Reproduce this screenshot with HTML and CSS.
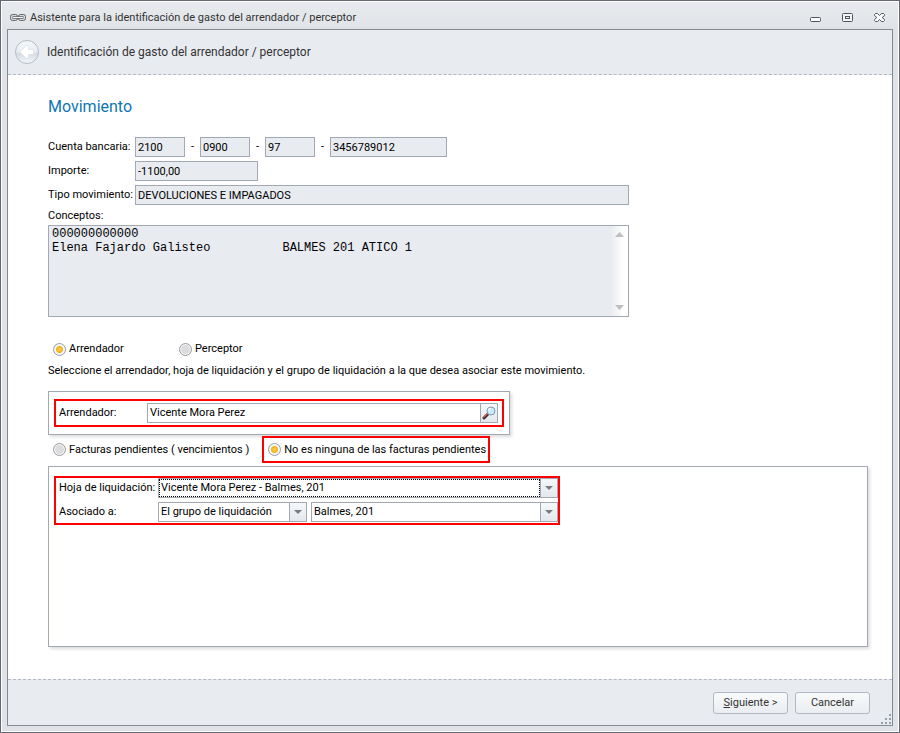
FILE: index.html
```html
<!DOCTYPE html>
<html lang="es">
<head>
    <meta charset="UTF-8">
    <meta name="viewport" content="width=device-width, initial-scale=1.0">
    <title>Asistente para la identificación de gasto</title>
    <link rel="stylesheet" href="styles.css">
</head>
<body>
    <div class="window">
        <div class="titlebar">
            <svg class="link-icon" width="16" height="8" viewBox="0 0 16 8" fill="none">
                <rect x="0.5" y="0.5" width="7" height="6" rx="2" fill="#d4d6d8" stroke="#65686b"/>
                <rect x="8.5" y="0.5" width="7" height="6" rx="2" fill="#d4d6d8" stroke="#65686b"/>
                <path d="M2.500 3.500h11" stroke="#65686b" stroke-width="2.600"/>
                <path d="M3 3.500h10" stroke="#f2f3f4" stroke-width="1"/>
            </svg>
            <span class="title">Asistente para la identificación de gasto del arrendador / perceptor</span>
            <div class="window-buttons">
                <button type="button" aria-label="Minimizar">
                    <svg width="11" height="10" viewBox="0 0 11 10"><rect x="0.5" y="4.5" width="10" height="4" rx="1" fill="#fff" stroke="#4d545c"/></svg>
                </button>
                <button type="button" aria-label="Maximizar">
                    <svg width="11" height="10" viewBox="0 0 11 10" fill="#f4f5f6" stroke="#4d545c"><rect x="0.5" y="0.5" width="10" height="8" rx="1"/><rect x="3.5" y="3.5" width="4" height="2"/></svg>
                </button>
                <button type="button" aria-label="Cerrar">
                    <svg width="11" height="10" viewBox="0 0 11 10"><path d="M1.500 0.500h2l2 2 2-2h2l1 1v1l-2.300 2 2.300 2v1l-1 1h-2l-2-2-2 2h-2l-1-1v-1l2.300-2-2.300-2v-1z" fill="#fff" stroke="#4d545c"/></svg>
                </button>
            </div>
        </div>

        <form class="wizard">
            <header class="wizard-header">
                <button type="button" class="back" aria-label="Atrás">
                    <svg width="26" height="26" viewBox="0 0 26 26">
                        <defs>
                            <linearGradient id="disc" x1="0" y1="0" x2="0" y2="1">
                                <stop offset="0" stop-color="#f5f8fa"/>
                                <stop offset="0.5" stop-color="#e9edf2"/>
                                <stop offset="0.55" stop-color="#d3dae2"/>
                                <stop offset="1" stop-color="#f4f8fb"/>
                            </linearGradient>
                        </defs>
                        <circle cx="13" cy="13" r="11.500" fill="url(#disc)" stroke="#b4bbc5"/>
                        <path d="M6 13l6.500-6.500 2 1.500v2.500h5v5h-5v2.500l-2 1.500z" fill="#fff" stroke="#d8dde3" stroke-width="0.6" stroke-linejoin="round"/>
                    </svg>
                </button>
                <h1>Identificación de gasto del arrendador / perceptor</h1>
            </header>

            <main class="content">
                <h2>Movimiento</h2>

                <div class="movement">
                    <label for="banco">Cuenta bancaria:</label>
                    <div class="account">
                        <input class="field part" id="banco" value="2100" readonly>
                        <span>-</span>
                        <input class="field part" aria-label="Sucursal" value="0900" readonly>
                        <span>-</span>
                        <input class="field part" aria-label="Dígito de control" value="97" readonly>
                        <span>-</span>
                        <input class="field number" aria-label="Número de cuenta" value="3456789012" readonly>
                    </div>
                    <label for="importe">Importe:</label>
                    <input class="field amount" id="importe" value="-1100,00" readonly>
                    <label for="tipo">Tipo movimiento:</label>
                    <input class="field" id="tipo" value="DEVOLUCIONES E IMPAGADOS" readonly>
                </div>

                <label class="concepts-label" for="conceptos">Conceptos:</label>
                <div class="concepts">
                    <textarea id="conceptos" readonly>000000000000
Elena Fajardo Galisteo          BALMES 201 ATICO 1</textarea>
                    <div class="scrollbar">
                        <svg width="9" height="5" viewBox="0 0 9 5"><path d="M0 5L4.500 0 9 5z" fill="#bfbfbf"/></svg>
                        <svg width="9" height="5" viewBox="0 0 9 5"><path d="M0 0L4.500 5 9 0z" fill="#bfbfbf"/></svg>
                    </div>
                </div>

                <div class="choices who">
                    <label><input type="radio" name="quien" checked>Arrendador</label>
                    <label><input type="radio" name="quien">Perceptor</label>
                </div>
                <p>Seleccione el arrendador, hoja de liquidación y el grupo de liquidación a la que desea asociar este movimiento.</p>

                <div class="panel landlord">
                    <div class="marked landlord-row">
                        <label for="arrendador">Arrendador:</label>
                        <div class="search">
                            <input id="arrendador" value="Vicente Mora Perez">
                            <button type="button" aria-label="Buscar">
                                <svg width="14" height="14" viewBox="0 0 14 14">
                                    <path d="M2 12L6 8" stroke="#39323a" stroke-width="3" stroke-linecap="round"/>
                                    <path d="M1.500 11L5 8" stroke="#d5614a" stroke-width="1.500" stroke-linecap="round"/>
                                    <circle cx="9" cy="5" r="4" fill="#c8eafa" stroke="#8197b5"/>
                                    <path d="M6.500 4.500A2.500 2.500 0 0 1 9 2.500" fill="none" stroke="#fff" stroke-width="1.500"/>
                                </svg>
                            </button>
                        </div>
                    </div>
                </div>

                <div class="choices kind">
                    <label><input type="radio" name="factura">Facturas pendientes ( vencimientos )</label>
                    <label class="marked"><input type="radio" name="factura" checked>No es ninguna de las facturas pendientes</label>
                </div>

                <div class="panel settlement">
                    <div class="marked settlement-rows">
                        <label for="hoja">Hoja de liquidación:</label>
                        <div class="combo focused">
                            <select id="hoja"><option>Vicente Mora Perez - Balmes, 201</option></select>
                        </div>
                        <label for="asociado">Asociado a:</label>
                        <div class="pair">
                            <div class="combo group">
                                <select id="asociado"><option>El grupo de liquidación</option></select>
                            </div>
                            <div class="combo">
                                <select aria-label="Grupo"><option>Balmes, 201</option></select>
                            </div>
                        </div>
                    </div>
                </div>
            </main>

            <footer class="wizard-footer">
                <button type="button" class="action"><u>S</u>iguiente &gt;</button>
                <button type="button" class="action">Cancelar</button>
                <svg class="grip" width="10" height="10" viewBox="0 0 10 10" fill="#9a9ea6">
                    <path d="M8 0h2v2h-2zM4 4h2v2h-2zM8 4h2v2h-2zM0 8h2v2h-2zM4 8h2v2h-2zM8 8h2v2h-2z"/>
                </svg>
            </footer>
        </form>
    </div>
</body>
</html>
```
FILE: styles.css
```css
* {
    box-sizing: border-box;
}

body {
    margin: 0;
    font-family: Roboto, "Noto Sans", sans-serif;
    font-size: 11px;
    line-height: 16px;
    color: #000;
}

input, select, textarea, button {
    font: inherit;
    color: inherit;
    margin: 0;
}

label {
    white-space: nowrap;
}

h1, h2, p {
    margin: 0;
    font-weight: normal;
}

.window {
    display: flex;
    flex-direction: column;
    min-height: 100vh;
    padding: 0 6px 6px;
    border: 1px solid #646973;
    box-shadow: inset 0 0 0 1px #fff;
    background: linear-gradient(#e9ebee, #dfe3e7 30px);
}

.titlebar {
    display: flex;
    align-items: center;
    height: 28px;
    padding: 6px 8px 0 3px;
    color: #333;
}

.title {
    margin-left: 4px;
}

.window-buttons {
    display: flex;
    gap: 21px;
    margin-left: auto;
}

.window-buttons button {
    display: flex;
    padding: 0;
    border: 0;
    background: none;
}

.wizard {
    display: flex;
    flex-direction: column;
    flex: 1;
    border: 1px solid #858990;
    background: #fff;
}

.wizard-header {
    display: flex;
    align-items: center;
    gap: 7px;
    height: 45px;
    padding: 0 6px;
    border-bottom: 1px dashed #b2b8c4;
    background: #e8ebf0;
    color: #333;
}

.back {
    display: flex;
    padding: 0;
    border: 0;
    background: none;
}

.wizard-header h1 {
    font-size: 12px;
}

.content {
    flex: 1;
    padding: 21px 24px 30px 40px;
}

.content h2 {
    font-size: 16px;
    line-height: 22px;
    color: #0e76b4;
}

.movement {
    display: grid;
    grid-template-columns: 87px 494px;
    align-items: center;
    row-gap: 4px;
    margin-top: 19px;
}

.field {
    width: 100%;
    height: 20px;
    padding: 0 2px;
    border: 1px solid #a2a9b4;
    background: #e8ebf0;
}

.account {
    display: flex;
    align-items: center;
}

.account span {
    width: 15px;
    text-align: center;
}

.part {
    width: 50px;
}

.number {
    width: 117px;
}

.amount {
    width: 123px;
}

.concepts-label {
    display: block;
    margin-top: 3px;
}

.concepts {
    display: flex;
    width: 581px;
    height: 92px;
    margin-top: 1px;
    border: 1px solid #a2a9b4;
    background: #e8ebf0;
}

.concepts textarea {
    flex: 1;
    padding: 1px 3px;
    border: 0;
    outline: 0;
    resize: none;
    background: none;
    font-family: "Liberation Mono", "Courier New", monospace;
    font-size: 12px;
    line-height: 14px;
}

.scrollbar {
    display: flex;
    flex-direction: column;
    justify-content: space-between;
    align-items: center;
    width: 17px;
    padding: 6px 0;
    background: linear-gradient(to right, #e8ebf0, #fff 12px);
}

.choices {
    display: flex;
    align-items: center;
}

.choices label {
    display: flex;
    align-items: center;
}

.choices input {
    appearance: none;
    width: 13px;
    height: 13px;
    margin-right: 3px;
    border: 1px solid #999da5;
    border-radius: 50%;
    background: #dcdcdc;
    box-shadow: inset 0 0 0 1px #f6f6f6;
}

.choices input:checked {
    background: radial-gradient(circle, #ffd65c 0, #f5b014 3px, #f6f6f6 4px);
}

.who {
    margin-top: 24px;
    padding-left: 5px;
}

.who label {
    width: 126px;
}

.choices + p {
    margin-top: 6px;
}

.panel {
    border: 1px solid #a2a9b4;
    background: #fff;
    box-shadow: 2px 2px 3px #ddd;
}

.marked {
    border: 2px solid #f00;
}

.landlord {
    width: 462px;
    height: 44px;
    margin-top: 12px;
    padding: 7px 5px;
}

.landlord-row {
    display: grid;
    grid-template-columns: 88px 1fr;
    align-items: center;
    padding: 2px 4px 2px 3px;
}

.search {
    display: flex;
    height: 20px;
    border: 1px solid #a2a9b4;
}

.search input {
    flex: 1;
    min-width: 0;
    padding: 0 2px;
    border: 0;
    outline: 0;
}

.search button {
    display: flex;
    align-items: center;
    justify-content: center;
    width: 17px;
    padding: 0;
    border: 0;
    border-left: 1px solid #a2a9b4;
    background: linear-gradient(#f6f8fa, #e4e8ec);
}

.kind {
    gap: 13px;
    margin-top: 1px;
    padding-left: 5px;
}

.kind .marked {
    height: 27px;
    padding: 0 2px 0 4px;
}

.settlement {
    height: 181px;
    margin-top: 3px;
    padding: 9px 5px;
}

.settlement-rows {
    display: grid;
    grid-template-columns: 99px 400px;
    align-items: center;
    row-gap: 4px;
    width: 506px;
    padding: 0 0 1px 3px;
}

.pair {
    display: flex;
    gap: 4px;
}

.combo {
    position: relative;
    flex: 1;
    height: 20px;
    border: 1px solid #a2a9b4;
    background: #fff;
}

.combo.group {
    flex: 0 0 149px;
}

.combo select {
    appearance: none;
    display: block;
    width: 100%;
    height: 18px;
    padding: 0 18px 0 2px;
    border: 0;
    outline: 0;
    background: none;
}

.combo::before {
    content: "";
    position: absolute;
    top: 0;
    right: 0;
    bottom: 0;
    width: 16px;
    border-left: 1px solid #a2a9b4;
    background: linear-gradient(#f6f8fa, #e4e8ec);
    pointer-events: none;
}

/* drop-down arrow */
.combo::after {
    content: "";
    position: absolute;
    top: 7px;
    right: 4px;
    border: 4px solid transparent;
    border-top-color: #777c82;
    border-bottom: 0;
    pointer-events: none;
}

.combo.focused select {
    width: calc(100% - 17px);
    padding: 0 1px;
    border: 1px dotted #000;
}

.wizard-footer {
    position: relative;
    display: flex;
    justify-content: flex-end;
    align-items: center;
    gap: 7px;
    height: 46px;
    padding: 0 22px;
    border-top: 1px dashed #b2b8c4;
    background: #e8ebf0;
}

.action {
    width: 75px;
    height: 22px;
    padding: 0;
    border: 1px solid #b3b8c0;
    border-radius: 3px;
    background: linear-gradient(#f8fafb, #eaedf1);
    color: #333;
}

.grip {
    position: absolute;
    right: 1px;
    bottom: 1px;
}
```
